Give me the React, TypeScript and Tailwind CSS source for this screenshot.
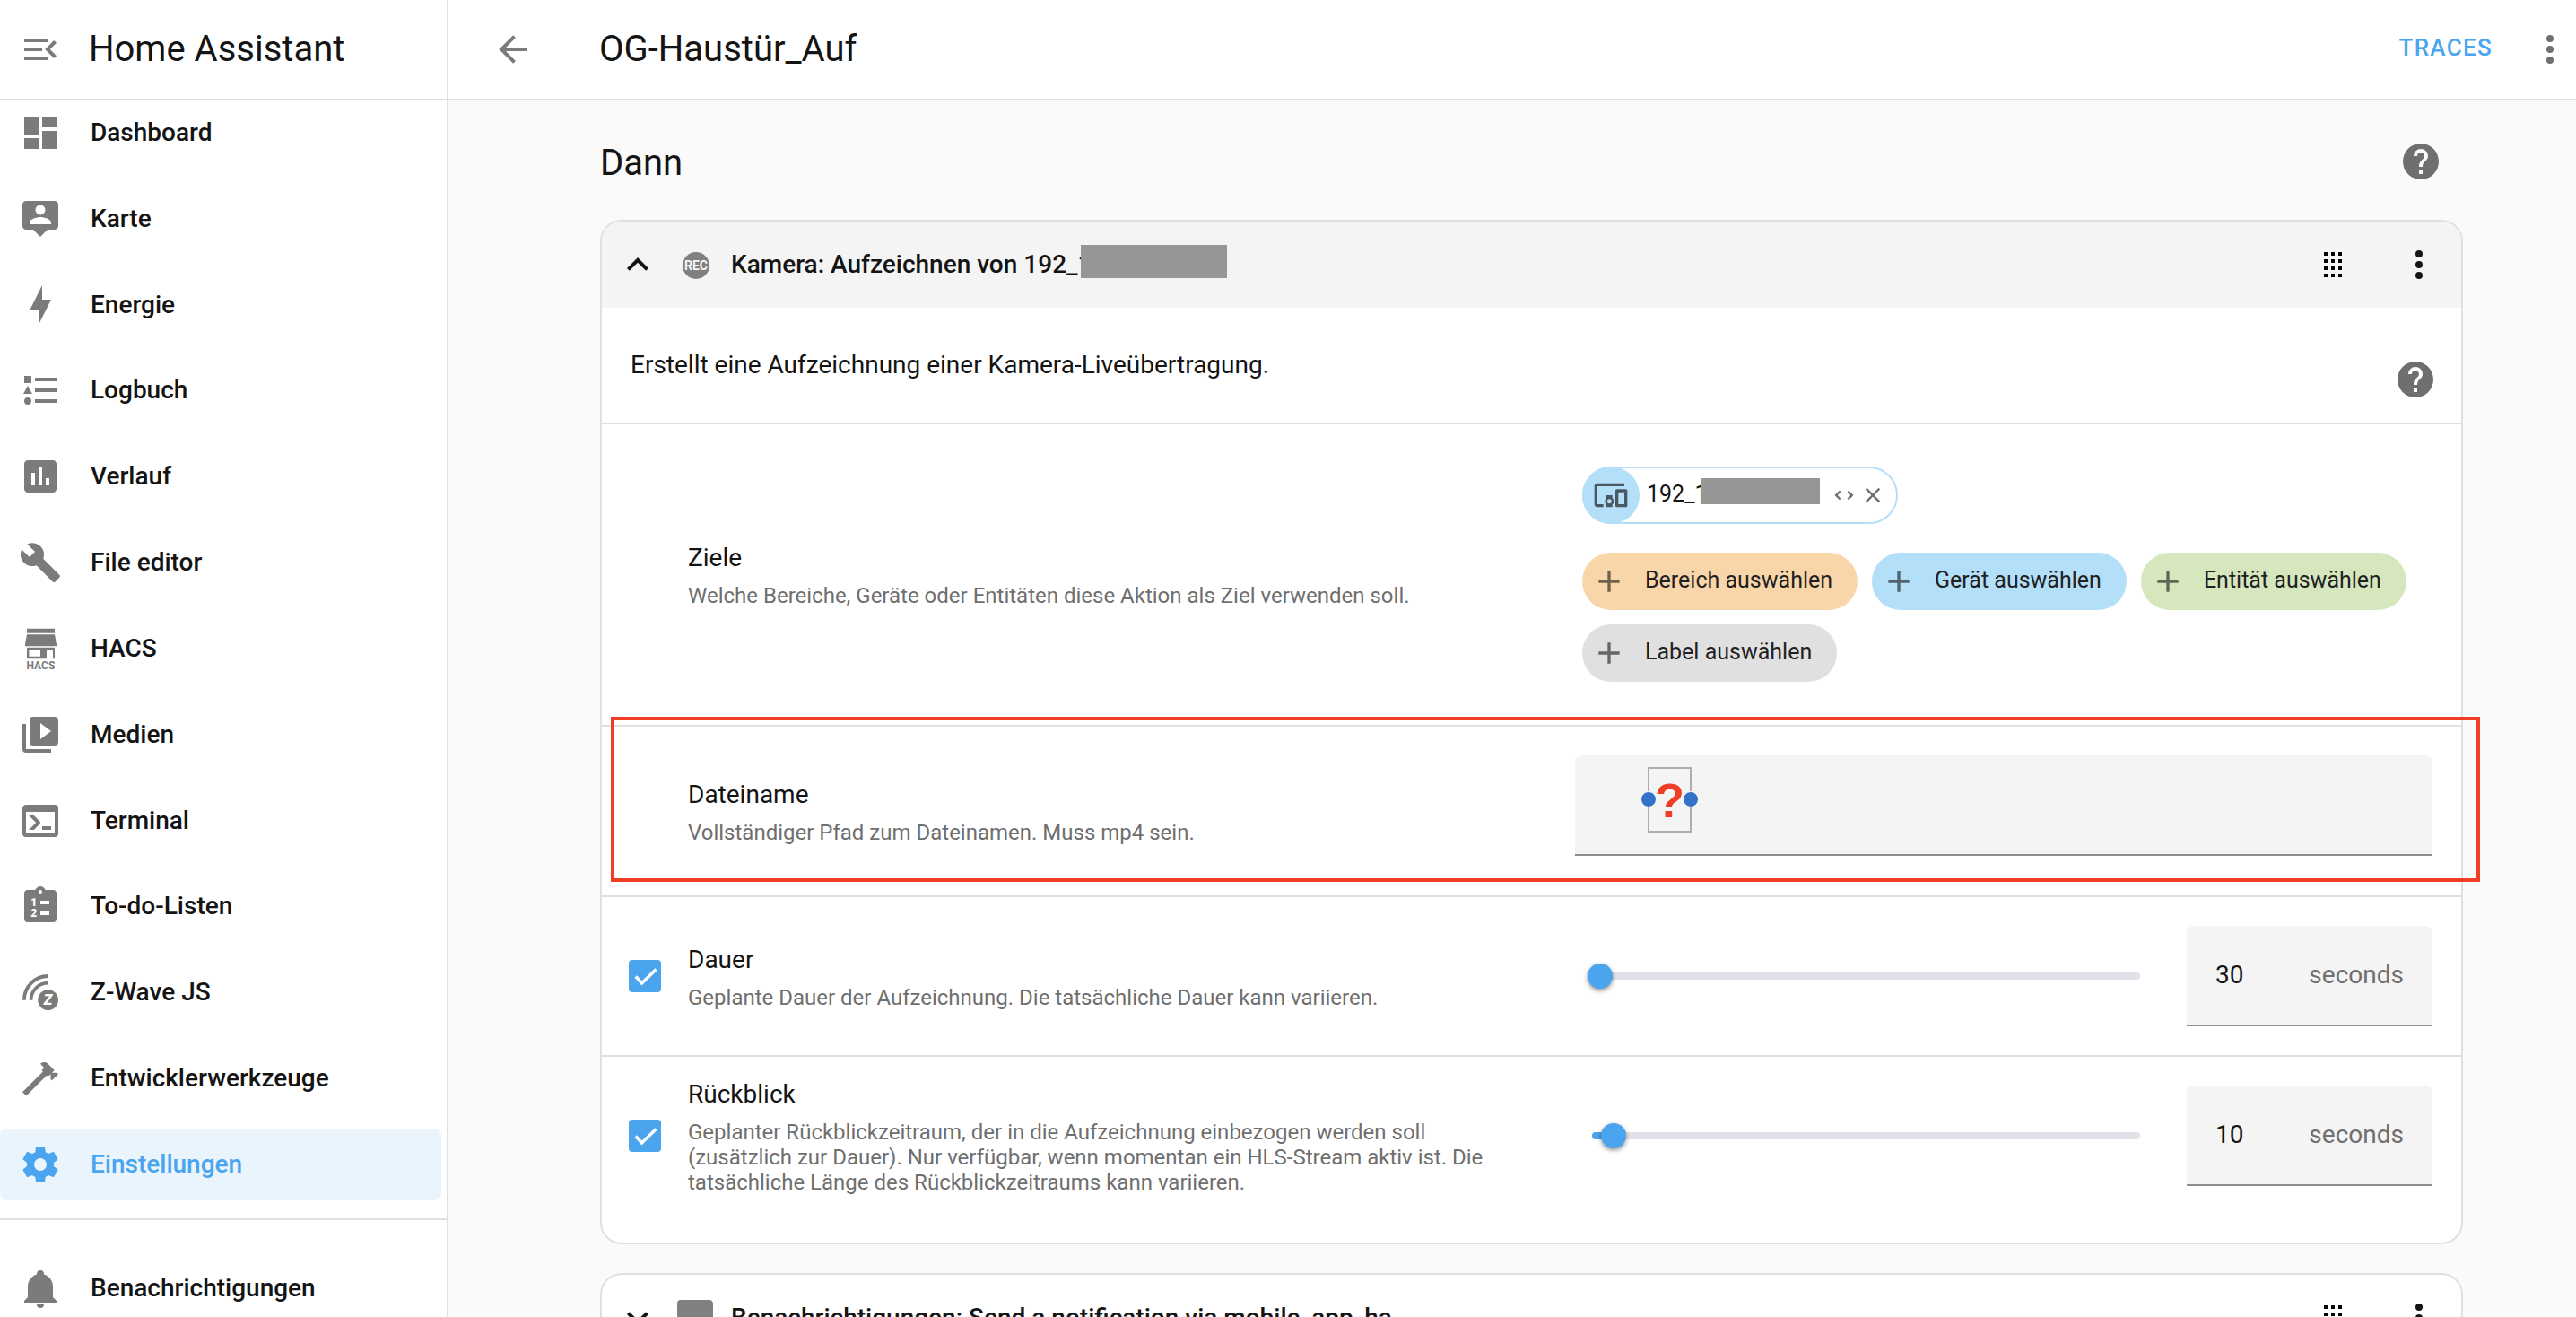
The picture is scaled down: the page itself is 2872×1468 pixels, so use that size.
import React, { useState } from 'react';

const paths = {
  menuOpen: 'M21,15.61L19.59,17L14.58,12L19.59,7L21,8.39L17.44,12L21,15.61M3,6H16V8H3V6M3,13V11H13V13H3M3,18V16H16V18H3Z',
  dashboard: 'M13,3V9H21V3M13,21H21V11H13M3,21H11V15H3M3,13H11V3H3V13Z',
  account: 'M20 2H4C2.89 2 2 2.89 2 4V16C2 17.11 2.9 18 4 18H8L12 22L16 18H20C21.11 18 22 17.11 22 16V4C22 2.89 21.1 2 20 2M12 4.3C13.5 4.3 14.7 5.5 14.7 7S13.5 9.7 12 9.7 9.3 8.5 9.3 7 10.5 4.3 12 4.3M18 15H6V14.1C6 12.1 10 11 12 11S18 12.1 18 14.1V15Z',
  bolt: 'M11 15H6L13 1V9H18L11 23V15Z',
  list: 'M5,9.5L7.5,14H2.5L5,9.5M3,4H7V8H3V4M5,20A2,2 0 0,0 7,18A2,2 0 0,0 5,16A2,2 0 0,0 3,18A2,2 0 0,0 5,20M9,5V7H21V5H9M9,19H21V17H9V19M9,13H21V11H9V13Z',
  chart: 'M19 3H5C3.9 3 3 3.9 3 5V19C3 20.1 3.9 21 5 21H19C20.1 21 21 20.1 21 19V5C21 3.9 20.1 3 19 3M9 17H7V10H9V17M13 17H11V7H13V17M17 17H15V13H17V17Z',
  wrench: 'M22.7,19L13.6,9.9C14.5,7.6 14,4.9 12.1,3C10.1,1 7.1,0.6 4.7,1.7L9,6L6,9L1.6,4.7C0.4,7.1 0.9,10.1 2.9,12.1C4.8,14 7.5,14.5 9.8,13.6L18.9,22.7C19.3,23.1 19.9,23.1 20.3,22.7L22.6,20.4C23.1,20 23.1,19.3 22.7,19Z',
  media: 'M4,6H2V20A2,2 0 0,0 4,22H18V20H4V6M20,2H8A2,2 0 0,0 6,4V16A2,2 0 0,0 8,18H20A2,2 0 0,0 22,16V4A2,2 0 0,0 20,2M12,14.5V5.5L18,10L12,14.5Z',
  console: 'M20,19V7H4V19H20M20,3A2,2 0 0,1 22,5V19A2,2 0 0,1 20,21H4A2,2 0 0,1 2,19V5C2,3.89 2.9,3 4,3H20M13,17V15H18V17H13M9.58,13L5.57,9H8.4L11.7,12.3C12.09,12.69 12.09,13.33 11.7,13.72L8.42,17H5.59L9.58,13Z',
  hammer: 'M2 19.63L13.43 8.2L12.72 7.5L14.14 6.07L12 3.89C13.2 2.7 15.09 2.7 16.27 3.89L19.87 7.5L18.45 8.91H21.29L22 9.62L18.45 13.17L17.74 12.46V9.62L16.27 11.04L15.56 10.33L4.13 21.76L2 19.63Z',
  cog: 'M12,15.5A3.5,3.5 0 0,1 8.5,12A3.5,3.5 0 0,1 12,8.5A3.5,3.5 0 0,1 15.5,12A3.5,3.5 0 0,1 12,15.5M19.43,12.97C19.47,12.65 19.5,12.33 19.5,12C19.5,11.67 19.47,11.34 19.43,11L21.54,9.37C21.73,9.22 21.78,8.95 21.66,8.73L19.66,5.27C19.54,5.05 19.27,4.96 19.05,5.05L16.56,6.05C16.04,5.66 15.5,5.32 14.87,5.07L14.5,2.42C14.46,2.18 14.25,2 14,2H10C9.75,2 9.54,2.18 9.5,2.42L9.13,5.07C8.5,5.32 7.96,5.66 7.44,6.05L4.95,5.05C4.73,4.96 4.46,5.05 4.34,5.27L2.34,8.73C2.21,8.95 2.27,9.22 2.46,9.37L4.57,11C4.53,11.34 4.5,11.67 4.5,12C4.5,12.33 4.53,12.65 4.57,12.97L2.46,14.63C2.27,14.78 2.21,15.05 2.34,15.27L4.34,18.73C4.46,18.95 4.73,19.03 4.95,18.95L7.44,17.94C7.96,18.34 8.5,18.68 9.13,18.93L9.5,21.58C9.54,21.82 9.75,22 10,22H14C14.25,22 14.46,21.82 14.5,21.58L14.87,18.93C15.5,18.67 16.04,18.34 16.56,17.94L19.05,18.95C19.27,19.03 19.54,18.95 19.66,18.73L21.66,15.27C21.78,15.05 21.73,14.78 21.54,14.63L19.43,12.97Z',
  bell: 'M21,19V20H3V19L5,17V11C5,7.9 7.03,5.17 10,4.29C10,4.19 10,4.1 10,4A2,2 0 0,1 12,2A2,2 0 0,1 14,4C14,4.1 14,4.19 14,4.29C16.97,5.17 19,7.9 19,11V17L21,19M14,21A2,2 0 0,1 12,23A2,2 0 0,1 10,21',
  arrowLeft: 'M20,11V13H8L13.5,18.5L12.08,19.92L4.16,12L12.08,4.08L13.5,5.5L8,11H20Z',
  dots: 'M12,16A2,2 0 0,1 14,18A2,2 0 0,1 12,20A2,2 0 0,1 10,18A2,2 0 0,1 12,16M12,10A2,2 0 0,1 14,12A2,2 0 0,1 12,14A2,2 0 0,1 10,12A2,2 0 0,1 12,10M12,4A2,2 0 0,1 14,6A2,2 0 0,1 12,8A2,2 0 0,1 10,6A2,2 0 0,1 12,4Z',
  help: 'M15.07,11.25L14.17,12.17C13.45,12.89 13,13.5 13,15H11V14.5C11,13.39 11.45,12.39 12.17,11.67L13.41,10.41C13.78,10.05 14,9.55 14,9C14,7.89 13.1,7 12,7A2,2 0 0,0 10,9H8A4,4 0 0,1 12,5A4,4 0 0,1 16,9C16,9.88 15.64,10.67 15.07,11.25M13,19H11V17H13M12,2A10,10 0 0,0 2,12A10,10 0 0,0 12,22A10,10 0 0,0 22,12C22,6.47 17.5,2 12,2Z',
  chevronUp: 'M7.41,15.41L12,10.83L16.59,15.41L18,14L12,8L6,14L7.41,15.41Z',
  chevronDown: 'M7.41,8.58L12,13.17L16.59,8.58L18,10L12,16L6,10L7.41,8.58Z',
  drag: 'M7,19V17H9V19H7M11,19V17H13V19H11M15,19V17H17V19H15M7,15V13H9V15H7M11,15V13H13V15H11M15,15V13H17V15H15M7,11V9H9V11H7M11,11V9H13V11H11M15,11V9H17V11H15M7,7V5H9V7H7M11,7V5H13V7H11M15,7V5H17V7H15Z',
  message: 'M20,2H4A2,2 0 0,0 2,4V22L6,18H20A2,2 0 0,0 22,16V4C22,2.89 21.1,2 20,2Z',
  devices: 'M3 6H21V4H3C1.9 4 1 4.9 1 6V18C1 19.1 1.9 20 3 20H7V18H3V6M13 12H9V13.78C8.39 14.33 8 15.11 8 16C8 16.89 8.39 17.67 9 18.22V20H13V18.22C13.61 17.67 14 16.88 14 16S13.61 14.33 13 13.78V12M11 17.5C10.17 17.5 9.5 16.83 9.5 16S10.17 14.5 11 14.5 12.5 15.17 12.5 16 11.83 17.5 11 17.5M22 8H16C15.5 8 15 8.5 15 9V19C15 19.5 15.5 20 16 20H22C22.5 20 23 19.5 23 19V9C23 8.5 22.5 8 22 8M21 18H17V10H21V18Z',
  unfold: 'M18.17,12L15,8.83L16.41,7.41L21,12L16.41,16.58L15,15.17L18.17,12M5.83,12L9,15.17L7.59,16.59L3,12L7.59,7.42L9,8.83L5.83,12Z',
  close: 'M19,6.41L17.59,5L12,10.59L6.41,5L5,6.41L10.59,12L5,17.59L6.41,19L12,13.41L17.59,19L19,17.59L13.41,12L19,6.41Z',
  plus: 'M19,13H13V19H11V13H5V11H11V5H13V11H19V13Z',
};

const Icon: React.FC<{ name: keyof typeof paths; className?: string }> = ({ name, className = 'size-12' }) => (
  <svg viewBox="0 0 24 24" fill="currentColor" fillRule="evenodd" className={`shrink-0 ${className}`} aria-hidden="true">
    <path d={paths[name]} />
  </svg>
);

const HacsIcon = () => (
  <svg viewBox="0 0 24 24" fill="currentColor" className="size-12 shrink-0 overflow-visible" aria-hidden="true">
    <path fillRule="evenodd" d="M4.5,0.9H20V3.4H4.5ZM4.5,4.1H20L21,9.6V10.6H3.5V9.6ZM4.5,11.4H20V17.6H19V12.6H15.5V17.6H4.5ZM5.7,12.6V16.4H12V12.6Z" />
    <text x="12.2" y="23.3" textAnchor="middle" className="font-[Roboto,sans-serif] text-[6px] font-bold">HACS</text>
  </svg>
);

const TodoIcon = () => (
  <svg viewBox="0 0 24 24" fill="currentColor" className="size-12 shrink-0" aria-hidden="true">
    <path fillRule="evenodd" d="M19,3H14.82C14.4,1.84 13.3,1 12,1C10.7,1 9.6,1.84 9.18,3H5A2,2 0 0,0 3,5V19A2,2 0 0,0 5,21H19A2,2 0 0,0 21,19V5A2,2 0 0,0 19,3M12,3A1,1 0 0,1 13,4A1,1 0 0,1 12,5A1,1 0 0,1 11,4A1,1 0 0,1 12,3M12,9H17V11H12ZM12,15H17V17H12Z" />
    <text x="8.4" y="12.2" textAnchor="middle" className="fill-white font-[Roboto,sans-serif] text-[6px] font-black">1</text>
    <text x="8.4" y="18.2" textAnchor="middle" className="fill-white font-[Roboto,sans-serif] text-[6px] font-black">2</text>
  </svg>
);

const ZWaveIcon = () => (
  <svg viewBox="0 0 24 24" fill="currentColor" className="size-12 shrink-0" aria-hidden="true">
    <path fill="none" stroke="currentColor" strokeWidth="1.9" d="M2.95,16.4A13.4,13.4 0 0,1 16.35,3M6.75,16.4A9.6,9.6 0 0,1 16.35,6.8" />
    <circle cx="16.3" cy="16.3" r="5.7" />
    <text x="16.2" y="19.2" textAnchor="middle" className="fill-white font-[Roboto,sans-serif] text-[8px] font-black italic">Z</text>
  </svg>
);

const RecordIcon = () => (
  <svg viewBox="0 0 24 24" fill="currentColor" className="size-12 shrink-0 text-[#808080]" aria-hidden="true">
    <circle cx="12.5" cy="12.5" r="7.5" />
    <text x="12.5" y="15" textAnchor="middle" className="fill-[#f4f4f4] font-[Roboto,sans-serif] text-[7px] font-bold">REC</text>
  </svg>
);

const navItems = [
  { label: 'Dashboard', icon: <Icon name="dashboard" /> },
  { label: 'Karte', icon: <Icon name="account" /> },
  { label: 'Energie', icon: <Icon name="bolt" /> },
  { label: 'Logbuch', icon: <Icon name="list" /> },
  { label: 'Verlauf', icon: <Icon name="chart" /> },
  { label: 'File editor', icon: <Icon name="wrench" /> },
  { label: 'HACS', icon: <HacsIcon /> },
  { label: 'Medien', icon: <Icon name="media" /> },
  { label: 'Terminal', icon: <Icon name="console" /> },
  { label: 'To-do-Listen', icon: <TodoIcon /> },
  { label: 'Z-Wave JS', icon: <ZWaveIcon /> },
  { label: 'Entwicklerwerkzeuge', icon: <Icon name="hammer" /> },
  { label: 'Einstellungen', icon: <Icon name="cog" />, active: true },
];

const NavLink: React.FC<{ label: string; icon: React.ReactNode; active?: boolean }> = ({ label, icon, active }) => (
  <a
    href="#"
    className={`mr-1.5 flex h-20 items-center gap-8 rounded-lg pl-[21px] text-[28px] font-medium ${
      active ? 'bg-[#e9f4fc] text-[#4aa5ee]' : 'text-[#141414]'
    }`}
  >
    <span className={active ? '' : 'text-[#7b7b7b]'}>{icon}</span>
    {label}
  </a>
);

// Grey bar that hides the rest of an entity id
const Redacted: React.FC<{ className: string }> = ({ className }) => (
  <span className={`absolute bg-[#969696] ${className}`} />
);

const AddChip: React.FC<{ label: string; className: string }> = ({ label, className }) => (
  <button className={`flex h-16 items-center gap-5 rounded-full pr-7 pl-2.5 text-[25px] text-[#212121] ${className}`}>
    <Icon name="plus" className="size-10 text-black/55" />
    <span className="pb-0.5">{label}</span>
  </button>
);

interface RowProps {
  label: string;
  description: string;
  htmlFor?: string;
  check?: boolean;
  className?: string;
  overlay?: React.ReactNode;
  children: React.ReactNode;
}

const SettingsRow: React.FC<RowProps> = ({ label, description, htmlFor, check, className = 'py-8', overlay, children }) => (
  <div className={`relative grid grid-cols-[66px_989fr_956fr] items-center border-t-2 border-[#e0e0e0] pr-8 pl-[30px] ${className}`}>
    <div>
      {check && (
        <span className="relative block size-9">
          <input
            type="checkbox"
            defaultChecked
            aria-label={label}
            className="peer block size-9 appearance-none rounded-sm border-4 border-[#7b7b7b] checked:border-0 checked:bg-[#4aa5ee]"
          />
          <svg viewBox="0 0 36 36" className="pointer-events-none absolute inset-0 hidden size-9 peer-checked:block" aria-hidden="true">
            <polyline points="7.8,18.5 14.5,26 30.5,10.5" fill="none" stroke="white" strokeWidth="3.4" />
          </svg>
        </span>
      )}
    </div>
    <div className="pr-16">
      <label htmlFor={htmlFor} className="block text-[28px] leading-10 text-[#141414]">{label}</label>
      <p className="mt-2 text-[24px] leading-7 text-[#6f6f6f]">{description}</p>
    </div>
    {children}
    {overlay}
  </div>
);

const DurationField: React.FC<{ id: string; initial: number; max: number }> = ({ id, initial, max }) => {
  const [value, setValue] = useState(initial);

  return (
    <div className="flex items-center gap-[42px] pl-[9px]">
      <div className="relative flex h-7 flex-1 items-center">
        <div className="absolute inset-x-2.5 h-2 overflow-hidden rounded-full bg-[#e5e0e8]">
          <div className="h-full bg-[#4aa5ee]" style={{ width: `${(value / max) * 100}%` }} />
        </div>
        <input
          type="range"
          min={0}
          max={max}
          value={value}
          aria-label={`${id} Regler`}
          onChange={(e) => setValue(Number(e.target.value))}
          className="relative block h-7 w-full appearance-none bg-transparent [&::-webkit-slider-thumb]:size-7 [&::-webkit-slider-thumb]:appearance-none [&::-webkit-slider-thumb]:rounded-full [&::-webkit-slider-thumb]:bg-[#4aa5ee] [&::-webkit-slider-thumb]:shadow-[0_2px_5px_rgba(0,0,0,0.45)]"
        />
      </div>
      <div className="flex h-28 w-[274px] items-center rounded-t-lg border-b-2 border-[#8e8e8e] bg-[#f4f4f4] px-8 text-[28px]">
        <input
          id={id}
          type="text"
          inputMode="numeric"
          value={value}
          onChange={(e) => setValue(Number(e.target.value) || 0)}
          className="w-0 flex-1 bg-transparent text-[#141414] outline-none"
        />
        <span className="text-[#6f6f6f]">seconds</span>
      </div>
    </div>
  );
};

const CardHeader: React.FC<{ open?: boolean; icon: React.ReactNode; children: React.ReactNode }> = ({ open, icon, children }) => (
  <div className={`flex h-24 items-center rounded-t-[22px] pr-[23px] pl-4 text-[#141414] ${open ? 'bg-[#f4f4f4]' : ''}`}>
    <button aria-label="Aufklappen"><Icon name={open ? 'chevronUp' : 'chevronDown'} /></button>
    <span className="ml-4 text-[#808080]">{icon}</span>
    <h3 className="ml-4 flex-1 text-[28px] font-medium whitespace-nowrap">{children}</h3>
    <button aria-label="Verschieben" className="mr-12 text-black"><Icon name="drag" /></button>
    <button aria-label="Menü"><Icon name="dots" /></button>
  </div>
);

const App: React.FC = () => {
  const [filename, setFilename] = useState('');

  return (
    <div className="flex h-screen overflow-hidden bg-[#fafafa] font-[Roboto,sans-serif] text-[#141414]">
      {/* Sidebar */}
      <aside className="flex w-[500px] shrink-0 flex-col border-r-2 border-[#e0e0e0] bg-white">
        <div className="flex h-28 shrink-0 items-center gap-[30px] border-b-2 border-[#e0e0e0] pl-[21px]">
          <button aria-label="Seitenleiste" className="text-[#7b7b7b]"><Icon name="menuOpen" /></button>
          <span className="text-[40px]">Home Assistant</span>
        </div>
        <nav className="-mt-1 flex flex-1 flex-col justify-between pb-5">
          {navItems.map((item) => (
            <NavLink key={item.label} {...item} />
          ))}
        </nav>
        <div className="h-[110px] shrink-0 overflow-hidden border-t-2 border-[#e0e0e0] pt-9">
          <NavLink label="Benachrichtigungen" icon={<Icon name="bell" />} />
        </div>
      </aside>

      <div className="flex min-w-0 flex-1 flex-col">
        {/* Toolbar */}
        <header className="flex h-28 shrink-0 items-center border-b-2 border-[#e0e0e0] bg-white pr-[5px] pl-12">
          <button aria-label="Zurück" className="text-[#7b7b7b]"><Icon name="arrowLeft" /></button>
          <h1 className="ml-[72px] flex-1 text-[40px]">OG-Haustür_Auf</h1>
          <button className="mr-10 pb-1 text-[26px] font-medium tracking-wider text-[#4aa5ee]">TRACES</button>
          <button aria-label="Menü" className="text-[#6f6f6f]"><Icon name="dots" /></button>
        </header>

        <main className="min-h-0 flex-1 overflow-hidden pt-5 pr-[126px] pl-[169px]">
          <div className="mb-[17px] flex h-24 items-center justify-between pr-[23px]">
            <h2 className="pt-1 text-[40px]">Dann</h2>
            <a href="#" aria-label="Hilfe" className="text-[#6f6f6f]"><Icon name="help" /></a>
          </div>

          {/* Action: camera recording */}
          <section className="rounded-3xl border-2 border-[#e0e0e0] bg-white pb-[31px]">
            <CardHeader open icon={<RecordIcon />}>
              Kamera: Aufzeichnen von 192_<span className="relative">1<Redacted className="-top-[5px] left-[3px] h-[37px] w-[163px]" /></span>
            </CardHeader>

            <div className="flex h-32 items-start justify-between pr-[27px] pl-8">
              <p className="pt-11 text-[28px] leading-10">Erstellt eine Aufzeichnung einer Kamera-Liveübertragung.</p>
              <a href="#" aria-label="Hilfe" className="mt-14 text-[#6f6f6f]"><Icon name="help" /></a>
            </div>

            <SettingsRow
              label="Ziele"
              description="Welche Bereiche, Geräte oder Entitäten diese Aktion als Ziel verwenden soll."
              className="pt-[47px] pb-12"
            >
              <div className="flex flex-col items-start gap-8 pl-2">
                <div className="flex h-16 items-center rounded-full border-2 border-[#b3dff9] pr-3">
                  <span className="-ml-0.5 flex size-16 items-center justify-center rounded-full bg-[#b3dff9]">
                    <Icon name="devices" className="size-10 text-black/60" />
                  </span>
                  <span className="ml-2 w-[206px] pb-0.5 text-[25px]">
                    192_<span className="relative">1<Redacted className="-top-[3px] left-[7px] h-[29px] w-[133px]" /></span>
                  </span>
                  <button aria-label="Erweitern" className="text-[#6f6f6f]"><Icon name="unfold" className="size-7" /></button>
                  <button aria-label="Entfernen" className="ml-1 text-[#6f6f6f]"><Icon name="close" className="size-7" /></button>
                </div>
                <div className="flex flex-wrap gap-4">
                  <AddChip label="Bereich auswählen" className="bg-[#f9d6a9]" />
                  <AddChip label="Gerät auswählen" className="bg-[#b3dff9]" />
                  <AddChip label="Entität auswählen" className="bg-[#d6e7bd]" />
                  <AddChip label="Label auswählen" className="bg-[#e0e0e0]" />
                </div>
              </div>
            </SettingsRow>

            <SettingsRow
              label="Dateiname"
              description="Vollständiger Pfad zum Dateinamen. Muss mp4 sein."
              htmlFor="filename"
              overlay={<div className="pointer-events-none absolute -top-[11px] -right-[21px] left-2.5 h-[184px] border-4 border-[#ee3e26]" />}
            >
              <div className="relative mb-3">
                <input
                  id="filename"
                  type="text"
                  value={filename}
                  onChange={(e) => setFilename(e.target.value)}
                  className="block h-28 w-full rounded-t-lg border-b-2 border-[#8e8e8e] bg-[#f4f4f4] px-8 text-[28px] outline-none"
                />
                {/* Annotation text box with its two drag handles */}
                <div className="pointer-events-none absolute top-[13px] left-[81px] flex h-[73px] w-[49px] items-center justify-center border-2 border-[#adadad]">
                  <span className="font-['Liberation_Sans',sans-serif] text-[54px] leading-none font-bold text-[#ee3e26]">?</span>
                  <span className="absolute top-[25px] -left-2.5 size-[18px] rounded-full border border-white bg-[#3471c8]" />
                  <span className="absolute top-[25px] -right-2.5 size-[18px] rounded-full border border-white bg-[#3471c8]" />
                </div>
              </div>
            </SettingsRow>

            <SettingsRow
              label="Dauer"
              description="Geplante Dauer der Aufzeichnung. Die tatsächliche Dauer kann variieren."
              htmlFor="duration"
              check
            >
              <DurationField id="duration" initial={30} max={3600} />
            </SettingsRow>

            <SettingsRow
              label="Rückblick"
              description="Geplanter Rückblickzeitraum, der in die Aufzeichnung einbezogen werden soll (zusätzlich zur Dauer). Nur verfügbar, wenn momentan ein HLS-Stream aktiv ist. Die tatsächliche Länge des Rückblickzeitraums kann variieren."
              htmlFor="lookback"
              check
              className="py-[22px]"
            >
              <DurationField id="lookback" initial={10} max={300} />
            </SettingsRow>
          </section>

          {/* Action: notification */}
          <section className="mt-8 rounded-3xl border-2 border-[#e0e0e0] bg-white">
            <CardHeader icon={<Icon name="message" />}>
              Benachrichtigungen: Send a notification via mobile_app_ha
            </CardHeader>
          </section>
        </main>
      </div>
    </div>
  );
};

export default App;
